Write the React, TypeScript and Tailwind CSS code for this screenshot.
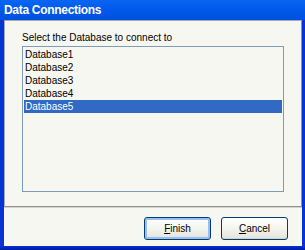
import { useState } from "react";

const databases = ["Database1", "Database2", "Database3", "Database4", "Database5"];

const XpButton = ({ label, hot, focused }: { label: string; hot: string; focused?: boolean }) => {
  const rest = label.slice(1);
  return (
    <button
      className={
        "w-[67px] h-[23px] rounded-[3px] border border-[#003C74] text-[10px] text-black bg-gradient-to-b from-[#FFFFFF] via-[#F4F4F0] to-[#E3E2DA] flex items-center justify-center " +
        (focused ? "shadow-[inset_0_0_0_2px_#9DBDF1]" : "shadow-[inset_0_-1px_0_#D6D0C5]")
      }
    >
      <span>
        <span className="underline">{hot}</span>
        {rest}
      </span>
    </button>
  );
};

export default function App() {
  const [selected, setSelected] = useState(4);

  return (
    <div
      className="w-[305px] h-[250px] flex flex-col bg-[#0733D6] overflow-hidden"
      style={{ fontFamily: '"Liberation Sans", Arial, sans-serif' }}
    >
      {/* title bar */}
      <div className="h-[20px] flex items-center pl-[4px] bg-gradient-to-b from-[#0A66F2] via-[#0058EC] to-[#0050DD]">
        <span className="text-white font-bold text-[12px] tracking-[-0.3px] leading-none">Data Connections</span>
      </div>

      <div className="flex-1 ml-[4px] mr-[3px] bg-[#F7F7F2] flex flex-col">
        {/* group panel */}
        <div className="h-[187px] border border-[#A3AAB4] border-r-[#8E9496] border-b-[#8E9496] pt-[11px] pl-[17px]">
          <div className="text-[10px] leading-[12px] text-black">Select the Database to connect to</div>
          <div className="mt-[2px] w-[262px] h-[146px] border border-[#7F9DB9] bg-[#F7F7F2] p-[1px]">
            {databases.map((db, i) => (
              <div
                key={db}
                onClick={() => setSelected(i)}
                className={
                  "h-[13px] pl-[1px] text-[10px] leading-[13px] " +
                  (selected === i ? "bg-[#316AC5] text-white" : "text-black")
                }
              >
                {db}
              </div>
            ))}
          </div>
        </div>
        <div className="h-[1px] bg-[#D9D3C1]" />

        {/* buttons */}
        <div className="flex justify-end gap-[10px] pt-[9px] pr-[14px]">
          <XpButton label="Finish" hot="F" focused />
          <XpButton label="Cancel" hot="C" />
        </div>
      </div>

      <div className="h-[4px] bg-gradient-to-b from-[#0030D8] to-[#001A9E]" />
    </div>
  );
}
